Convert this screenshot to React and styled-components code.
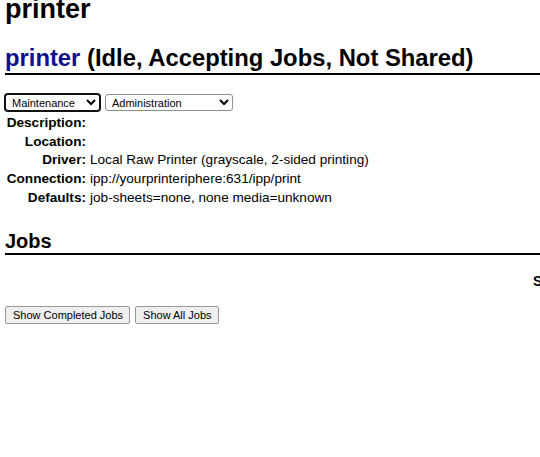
import React from "react";
import styled, { createGlobalStyle } from "styled-components";

const GlobalStyle = createGlobalStyle`
    html, body {
        margin: 0;
        padding: 0;
        background: #fff;
        color: #000;
        font-family: "Liberation Sans", Arial, sans-serif;
        overflow: hidden;
    }
`;

const details = [
    { label: "Description:", value: "" },
    { label: "Location:", value: "" },
    { label: "Driver:", value: "Local Raw Printer (grayscale, 2-sided printing)" },
    { label: "Connection:", value: "ipp://yourprinteriphere:631/ipp/print" },
    { label: "Defaults:", value: "job-sheets=none, none media=unknown" },
];

const App = () => {
    return (
        <Page>
            <GlobalStyle />
            <PageTitle>printer</PageTitle>
            <PrinterHeading>
                <PrinterLink href="#">printer</PrinterLink> (Idle, Accepting Jobs, Not Shared)
            </PrinterHeading>

            <ActionForm>
                <Select $focused style={{ width: 95 }} defaultValue="Maintenance">
                    <option>Maintenance</option>
                    <option>Print Test Page</option>
                    <option>Clean Print Heads</option>
                </Select>
                <Select style={{ width: 128 }} defaultValue="Administration">
                    <option>Administration</option>
                    <option>Modify Printer</option>
                    <option>Delete Printer</option>
                </Select>
            </ActionForm>

            <Details>
                {details.map((d) => (
                    <React.Fragment key={d.label}>
                        <Label>{d.label}</Label>
                        <Value>{d.value}</Value>
                    </React.Fragment>
                ))}
            </Details>

            <SectionHeading>Jobs</SectionHeading>

            <SearchRow>Search in printer:</SearchRow>

            <ButtonRow>
                <Button>Show Completed Jobs</Button>
                <Button>Show All Jobs</Button>
            </ButtonRow>
        </Page>
    );
};

export default App;

const Page = styled.div`
    width: 540px;
    height: 457px;
    padding-left: 5px;
    box-sizing: border-box;
    overflow: hidden;
`;

const PageTitle = styled.h1`
    margin: -6px 0 0;
    font-size: 27px;
    line-height: 31px;
    font-weight: bold;
`;

const PrinterHeading = styled.h2`
    margin: 19px 0 0;
    font-size: 23.8px;
    line-height: 28px;
    font-weight: bold;
    padding-bottom: 1px;
    border-bottom: 2px solid #000;
    white-space: nowrap;
`;

const PrinterLink = styled.a`
    color: #10108a;
    text-decoration: none;
`;

const ActionForm = styled.div`
    display: flex;
    gap: 5px;
    margin-top: 19px;
`;

const Select = styled.select`
    height: 17px;
    box-sizing: border-box;
    font-family: "Liberation Sans", Arial, sans-serif;
    font-size: 11px;
    color: #000;
    background: #fff;
    padding: 0 2px;
    border: 1px solid ${(p) => (p.$focused ? "#101010" : "#8f8f8f")};
    border-radius: 3px;
    box-shadow: ${(p) => (p.$focused ? "0 0 0 1px #101010" : "none")};
    outline: none;
`;

const Details = styled.div`
    display: grid;
    grid-template-columns: 81px auto;
    grid-auto-rows: 18.75px;
    column-gap: 4px;
    align-items: center;
    margin-top: 2px;
    font-size: 13.6px;
`;

const Label = styled.div`
    text-align: right;
    font-weight: bold;
    white-space: nowrap;
`;

const Value = styled.div`
    white-space: nowrap;
`;

const SectionHeading = styled.h2`
    margin: 22px 0 0;
    font-size: 20px;
    line-height: 24px;
    font-weight: bold;
    border-bottom: 2px solid #000;
`;

const SearchRow = styled.div`
    margin-top: 18px;
    padding-left: 528px;
    font-size: 14px;
    line-height: 16px;
    font-weight: bold;
    white-space: nowrap;
`;

const ButtonRow = styled.div`
    display: flex;
    gap: 5px;
    margin-top: 17px;
`;

const Button = styled.button`
    height: 18px;
    box-sizing: border-box;
    padding: 0 6px 0 7px;
    font-family: "Liberation Sans", Arial, sans-serif;
    font-size: 11px;
    color: #000;
    background: #efefef;
    border: 1px solid #9a9a9a;
    border-radius: 2px;
    white-space: nowrap;
`;
